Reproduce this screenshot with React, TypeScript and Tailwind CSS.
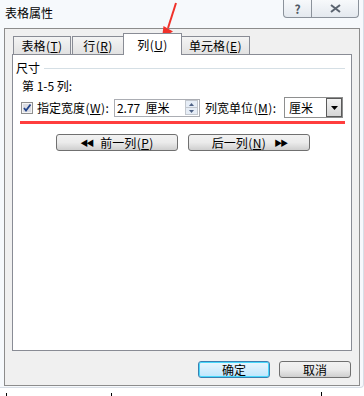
import React from 'react';

const font = { fontFamily: '"Noto Sans CJK SC", "Liberation Sans", sans-serif' };

// (T) style mnemonic with underlined letter, half-width cells like SimSun
const Key = ({ k }: { k: string }) => (
  <span className="inline-flex">
    <span className="inline-block w-[5px] text-center">(</span>
    <span className="inline-block min-w-[7px] text-center underline underline-offset-1">{k}</span>
    <span className="inline-block w-[5px] text-center">)</span>
  </span>
);

const Tab = ({ label, k, w, active }: { label: string; k: string; w: string; active?: boolean }) =>
  active ? (
    <div className={`${w} relative z-10 -mb-[1px] h-[22px] flex items-center justify-center bg-white border border-b-0 border-[#898c95] -mx-[1px]`}>
      {label}
      <Key k={k} />
    </div>
  ) : (
    <div className={`${w} h-[18px] mt-[3px] flex items-center justify-center bg-gradient-to-b from-[#f4f4f4] to-[#e2e2e2] border border-b-0 border-[#898c95]`}>
      {label}
      <Key k={k} />
    </div>
  );

const Btn = ({ children, w, focus }: { children: React.ReactNode; w: string; focus?: boolean }) => (
  <div
    className={`${w} h-[17px] flex items-center justify-center rounded-[3px] border ${
      focus
        ? 'border-[#3c7fb1] shadow-[inset_0_0_0_1px_#48d8fb] bg-gradient-to-b from-[#eaf6fd] to-[#bee6fd]'
        : 'border-[#707070] bg-gradient-to-b from-[#f2f2f2] via-[#ebebeb] to-[#cfcfcf]'
    }`}
  >
    {children}
  </div>
);

const Check = () => (
  <svg width="12" height="12" viewBox="0 0 12 12" className="shrink-0">
    <rect x="0.5" y="0.5" width="11" height="11" fill="#f4f4f4" stroke="#8f8f8f" />
    <rect x="2" y="2" width="8" height="8" fill="#dcdde3" />
    <path d="M3 6 L5 8.5 L9.5 2.5" fill="none" stroke="#21438a" strokeWidth="1.8" />
  </svg>
);

export default function App() {
  return (
    <div className="relative w-[364px] h-[396px] overflow-hidden bg-white text-[12px] leading-none text-black" style={font}>
      {/* window frame */}
      <div className="h-[388px] bg-[#f6f9fc] rounded-br-[4px] border-r border-b border-[#d8dee6]">
        {/* title bar */}
        <div className="h-[28px] flex items-start">
          <div className="pl-[5px] pt-[7px] text-[12px]">表格属性</div>
          <div className="ml-auto mr-[4px] flex h-[18px]">
            <div className="w-[29px] flex items-center justify-center border border-t-0 border-[#8b929b] rounded-bl-[4px] bg-gradient-to-b from-[#f7f9fb] to-[#e4e9ef] text-[12px] font-bold text-[#4f5863]">
              ?
            </div>
            <div className="w-[47px] flex items-center justify-center border border-t-0 border-l-0 border-[#8b929b] rounded-br-[4px] bg-gradient-to-b from-[#f7f9fb] to-[#e4e9ef]">
              <svg width="11" height="9" viewBox="0 0 11 9">
                <path d="M1 1 L10 8 M10 1 L1 8" stroke="#5b6470" strokeWidth="2" fill="none" />
              </svg>
            </div>
          </div>
        </div>

        {/* client area */}
        <div className="ml-[4px] w-[356px] h-[358px] border border-[#8c8c8c] bg-[#f0f0f0] flex flex-col pl-[7px] pr-[7px] pt-[4px]">
          {/* tabs */}
          <div className="flex items-start pl-[1px] h-[21px]">
            <Tab label="表格" k="T" w="w-[58px]" />
            <div className="ml-[1px]"><Tab label="行" k="R" w="w-[52px]" /></div>
            <Tab label="列" k="U" w="w-[59px]" active />
            <Tab label="单元格" k="E" w="w-[69px]" />
          </div>

          {/* tab panel */}
          <div className="h-[297px] bg-white border border-[#898c95] flex flex-col px-[3px] pt-[7px]">
            <div className="flex items-center gap-[4px]">
              <span>尺寸</span>
              <div className="flex-1 h-[1px] bg-[#d5dfe5] mr-[3px]" />
            </div>
            <div className="mt-[6px] ml-[6px]">第 1-5 列:</div>

            <div className="mt-[5px] flex items-center h-[21px] ml-[5px]">
              <Check />
              <span className="ml-[4px] inline-flex shrink-0">指定宽度<Key k="W" />:</span>
              <div className="ml-[5px] w-[86px] shrink-0 h-[18px] border border-[#abadb3] flex items-center pl-[2px] pr-[1px]">
                <span className="flex-1 whitespace-pre">2.77  厘米</span>
                <div className="w-[13px] h-[15px] flex flex-col border border-[#c2c7ce] bg-[#e6edf6]">
                  <div className="flex-1 flex items-center justify-center border-b border-[#c2c7ce]">
                    <svg width="5" height="3" viewBox="0 0 5 3"><path d="M0 3 L2.5 0 L5 3 Z" fill="#4d6185" /></svg>
                  </div>
                  <div className="flex-1 flex items-center justify-center">
                    <svg width="5" height="3" viewBox="0 0 5 3"><path d="M0 0 L2.5 3 L5 0 Z" fill="#4d6185" /></svg>
                  </div>
                </div>
              </div>
              <span className="ml-[5px] inline-flex shrink-0">列宽单位<Key k="M" />:</span>
              <div className="ml-[8px] w-[59px] shrink-0 h-[21px] border border-[#8e8f8f] flex items-center pl-[4px]">
                <span className="flex-1">厘米</span>
                <div className="w-[16px] h-[19px] border border-[#5a5a5a] bg-gradient-to-b from-[#f2f2f2] to-[#d6d6d6] flex items-center justify-center">
                  <svg width="7" height="4" viewBox="0 0 7 4"><path d="M0 0 L3.5 4 L7 0 Z" fill="#000" /></svg>
                </div>
              </div>
            </div>

            <div className="mt-[3px] ml-[4px] mr-[3px] h-[3px] bg-[#ff3d3d]" />

            <div className="mt-[10px] flex gap-[10px] ml-[40px]">
              <Btn w="w-[122px]">
                <span className="text-[8px] tracking-[-2px] mr-[8px]">◀◀</span>前一列<Key k="P" />
              </Btn>
              <Btn w="w-[122px]">
                后一列<Key k="N" />
                <span className="text-[8px] tracking-[-2px] ml-[8px]">▶▶</span>
              </Btn>
            </div>
          </div>

          {/* dialog buttons */}
          <div className="mt-[10px] flex justify-end gap-[9px] pr-[1px]">
            <Btn w="w-[72px]" focus>确定</Btn>
            <Btn w="w-[72px]">取消</Btn>
          </div>
        </div>
      </div>

      {/* table lines of the document behind */}
      <div className="absolute left-[6px] top-[393px] w-[1px] h-[3px] bg-black" />
      <div className="absolute left-[111px] top-[393px] w-[1px] h-[3px] bg-black" />
      <div className="absolute left-[321px] top-[392px] w-[1px] h-[4px] bg-black" />

      {/* red annotation arrow */}
      <svg className="absolute left-0 top-0 pointer-events-none" width="364" height="60">
        <path d="M176 3 L168 28" stroke="#f0312a" strokeWidth="2" fill="none" />
        <path d="M162 38 L163.5 26 L173 31.5 Z" fill="#f0312a" />
      </svg>
    </div>
  );
}
